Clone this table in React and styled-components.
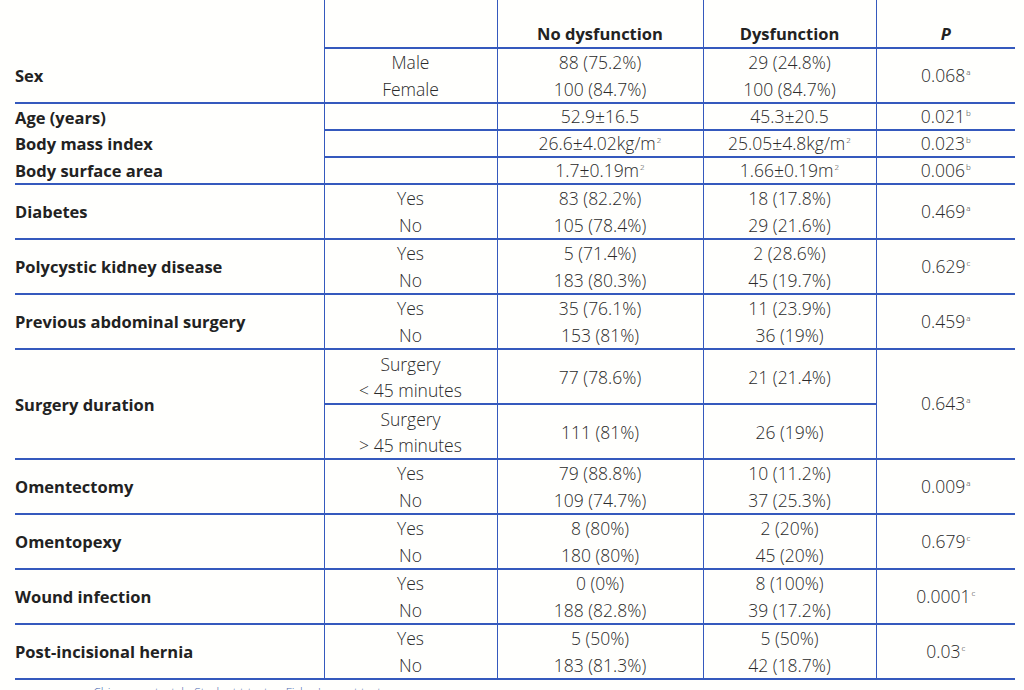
import React from "react";
import styled, { createGlobalStyle } from "styled-components";

const Global = createGlobalStyle`
  html, body { margin: 0; padding: 0; background: #ffffff; }
  body { font-family: "Open Sans", "Noto Sans", sans-serif; color: #333; }
`;

const LINE = "#3559bd";

const Page = styled.div`
  width: 1024px;
  height: 690px;
  overflow: hidden;
  background: #fffffd;
  padding-left: 15px;
  box-sizing: border-box;
`;

const Table = styled.table`
  border-collapse: collapse;
  table-layout: fixed;
  width: 1000px;
`;

const HeadCell = styled.th`
  height: 48px;
  padding: 0 0 2px;
  box-sizing: border-box;
  vertical-align: bottom;
  text-align: center;
  font-weight: 700;
  font-size: 16.5px;
  line-height: 22px;
  color: #222;
  font-style: ${(p) => (p.$italic ? "italic" : "normal")};
  border-left: ${(p) => (p.$noLeft ? "none" : `1px solid ${LINE}`)};
  border-bottom: ${(p) => (p.$noBottom ? "none" : `2px solid ${LINE}`)};
`;

const Label = styled.td`
  padding: 0;
  font-weight: 700;
  font-size: 16.5px;
  color: #222;
  text-align: left;
  vertical-align: middle;
  border-bottom: ${(p) => (p.$line ? `2px solid ${LINE}` : "none")};
`;

const Cell = styled.td`
  height: ${(p) => (p.$h ? p.$h : p.$single ? 25 : p.$line ? 25.5 : 27.5)}px;
  padding: 0;
  font-weight: 300;
  font-size: 17.5px;
  color: #2a2a2a;
  text-align: center;
  vertical-align: middle;
  line-height: ${(p) => (p.$h ? 26 : p.$single ? 25 : p.$line ? 25.5 : 27.5)}px;
  border-left: 1px solid ${LINE};
  border-bottom: ${(p) => (p.$line ? `2px solid ${LINE}` : "none")};
`;

const Sup = styled.sup`
  font-size: 8px;
  vertical-align: 7px;
  line-height: 0;
  margin-left: 1px;
`;

const Foot = styled.div`
  margin-top: 4px;
  padding-left: 66px;
  font-size: 12px;
  color: #4a6ab0;
  font-weight: 300;
`;

const m2 = (t) => (
  <>
    {t}
    <Sup>2</Sup>
  </>
);

const P = ({ v, s }) => (
  <>
    {v}
    <Sup>{s}</Sup>
  </>
);

const yesNo = [
  ["Diabetes", ["83 (82.2%)", "18 (17.8%)"], ["105 (78.4%)", "29 (21.6%)"], "0.469", "a"],
  ["Polycystic kidney disease", ["5 (71.4%)", "2 (28.6%)"], ["183 (80.3%)", "45 (19.7%)"], "0.629", "c"],
  ["Previous abdominal surgery", ["35 (76.1%)", "11 (23.9%)"], ["153 (81%)", "36 (19%)"], "0.459", "a"],
];

const yesNo2 = [
  ["Omentectomy", ["79 (88.8%)", "10 (11.2%)"], ["109 (74.7%)", "37 (25.3%)"], "0.009", "a"],
  ["Omentopexy", ["8 (80%)", "2 (20%)"], ["180 (80%)", "45 (20%)"], "0.679", "c"],
  ["Wound infection", ["0 (0%)", "8 (100%)"], ["188 (82.8%)", "39 (17.2%)"], "0.0001", "c"],
  ["Post-incisional hernia", ["5 (50%)", "5 (50%)"], ["183 (81.3%)", "42 (18.7%)"], "0.03", "c"],
];

const TwoRow = ({ label, a, b, p, s, aLabel = "Yes", bLabel = "No" }) => (
  <>
    <tr>
      <Label rowSpan={2} $line>{label}</Label>
      <Cell>{aLabel}</Cell>
      <Cell>{a[0]}</Cell>
      <Cell>{a[1]}</Cell>
      <Cell rowSpan={2} $line>
        <P v={p} s={s} />
      </Cell>
    </tr>
    <tr>
      <Cell $line>{bLabel}</Cell>
      <Cell $line>{b[0]}</Cell>
      <Cell $line>{b[1]}</Cell>
    </tr>
  </>
);

const SingleRow = ({ label, last, a, b, p, s }) => (
  <tr>
    <Label $line={last}>{label}</Label>
    <Cell $line $single />
    <Cell $line $single>{a}</Cell>
    <Cell $line $single>{b}</Cell>
    <Cell $line $single>
      <P v={p} s={s} />
    </Cell>
  </tr>
);

export default function App() {
  return (
    <Page>
      <Global />
      <Table>
        <colgroup>
          <col style={{ width: 309 }} />
          <col style={{ width: 173 }} />
          <col style={{ width: 206 }} />
          <col style={{ width: 173 }} />
          <col style={{ width: 139 }} />
        </colgroup>
        <thead>
          <tr>
            <HeadCell $noLeft $noBottom />
            <HeadCell />
            <HeadCell>No dysfunction</HeadCell>
            <HeadCell>Dysfunction</HeadCell>
            <HeadCell $italic>P</HeadCell>
          </tr>
        </thead>
        <tbody>
          <TwoRow
            label="Sex"
            aLabel="Male"
            bLabel="Female"
            a={["88 (75.2%)", "29 (24.8%)"]}
            b={["100 (84.7%)", "100 (84.7%)"]}
            p="0.068"
            s="a"
          />
          <SingleRow label="Age (years)" a="52.9±16.5" b="45.3±20.5" p="0.021" s="b" />
          <SingleRow
            label="Body mass index"
            a={m2("26.6±4.02kg/m")}
            b={m2("25.05±4.8kg/m")}
            p="0.023"
            s="b"
          />
          <SingleRow
            label="Body surface area"
            last
            a={m2("1.7±0.19m")}
            b={m2("1.66±0.19m")}
            p="0.006"
            s="b"
          />
          {yesNo.map(([l, a, b, p, s]) => (
            <TwoRow key={l} label={l} a={a} b={b} p={p} s={s} />
          ))}
          <tr>
            <Label rowSpan={2} $line>Surgery duration</Label>
            <Cell $line $h={53}>
              Surgery
              <br />
              &lt; 45 minutes
            </Cell>
            <Cell $line $h={53}>77 (78.6%)</Cell>
            <Cell $line $h={53}>21 (21.4%)</Cell>
            <Cell rowSpan={2} $line>
              <P v="0.643" s="a" />
            </Cell>
          </tr>
          <tr>
            <Cell $line $h={53}>
              Surgery
              <br />
              &gt; 45 minutes
            </Cell>
            <Cell $line $h={53}>111 (81%)</Cell>
            <Cell $line $h={53}>26 (19%)</Cell>
          </tr>
          {yesNo2.map(([l, a, b, p, s]) => (
            <TwoRow key={l} label={l} a={a} b={b} p={p} s={s} />
          ))}
        </tbody>
      </Table>
      <Foot>a: Chi-square test; b: Student t-test; c: Fisher's exact test</Foot>
    </Page>
  );
}
